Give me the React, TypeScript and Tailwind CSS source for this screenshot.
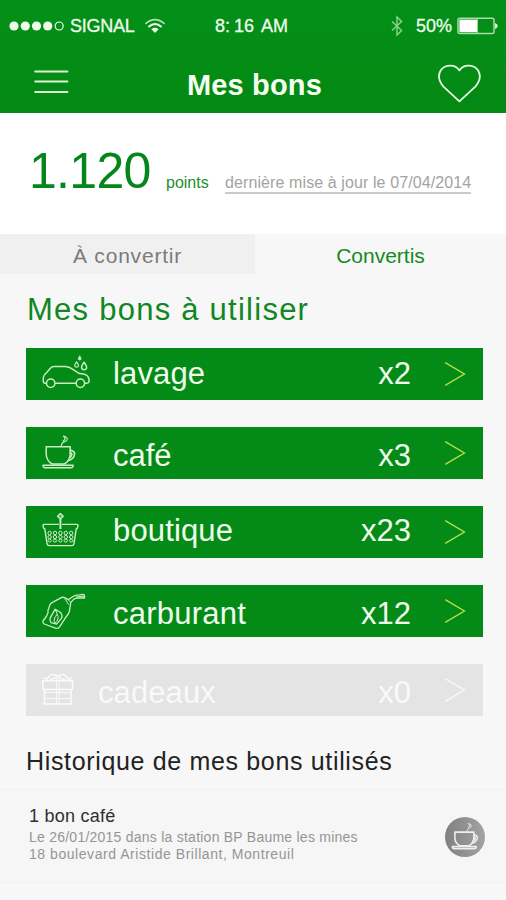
import type { ReactNode } from 'react';
import { clsx } from 'clsx';

interface Voucher {
    label: string;
    count: string;
    icon: ReactNode;
    labelClass: string;
    countClass: string;
    disabled?: boolean;
}

function CarWashIcon() {
    return (
        <svg
            viewBox="0 0 52 38"
            className="h-[38px] w-[52px]"
            fill="none"
            stroke="currentColor"
            strokeWidth="1.5"
            strokeLinejoin="round"
        >
            <path d="M6.5 28.2H4.6Q3.3 28 3.3 26.6V22.5Q3.6 19.6 6.7 17.6L10.6 13Q11.8 11.5 14 11.5H25.5Q29.6 11.8 34 15.2L39.4 18.6Q46 19 47.8 21.4Q49.2 23.6 49.2 26.4Q48.8 28.2 46.6 28.2H44.6M36.1 28.2H14.9" />
            <circle cx="10.7" cy="28.2" r="4.2" />
            <circle cx="40.4" cy="28.2" r="4.2" />
            <path d="M39.7 .8Q41.4 3.2 41 4.4Q39.7 5.8 38.4 4.4Q38 3.2 39.7 .8Z" fill="currentColor" strokeWidth=".8" />
            <path d="M36.6 6.8Q39 10 38.3 11.3Q36.6 13 34.9 11.3Q34.2 10 36.6 6.8Z" strokeWidth="1.2" />
            <path d="M44.1 7.2Q47.3 11.6 46.5 13.4Q44.1 16 41.7 13.4Q40.9 11.6 44.1 7.2Z" />
        </svg>
    );
}

function CupIcon({ className }: { className?: string }) {
    return (
        <svg
            viewBox="0 0 38 38"
            className={className}
            fill="none"
            stroke="currentColor"
            strokeWidth="1.5"
            strokeLinejoin="round"
            strokeLinecap="round"
        >
            <path d="M6.2 12.8H30.2V20Q30 27 24.2 30H12.4Q6.4 27 6.2 20Z" />
            <path d="M30.2 16.2Q33.6 16.2 34.8 19.4Q33.8 25.6 27.8 26.8M30.2 18.8Q31.8 18.8 32 20.2Q31.6 23 29.4 24" />
            <path d="M3 31.2H33.2Q33 33.8 31 33.8H5.2Q3.2 33.8 3 31.2Z" />
            <path d="M23.4 2Q27.8 3.2 27.2 5.6Q26.8 7.2 24.4 7.8Q21.4 8.8 21.2 12.4M23.4 2Q25.6 4 24.8 5.4Q24.2 6.4 23 7" strokeWidth="1.1" />
        </svg>
    );
}

function BasketIcon() {
    return (
        <svg
            viewBox="0 0 52 38"
            className="h-[38px] w-[52px]"
            fill="none"
            stroke="currentColor"
            strokeWidth="1.4"
            strokeLinejoin="round"
        >
            <path d="M18.8 11.4H4Q2.8 11.4 3 12.6L3.5 14.8Q3.8 15.8 4.8 15.8L7 30.6Q7.4 32.6 9.2 32.6H31.8Q33.6 32.6 34 30.6L36.2 15.8Q37.2 15.8 37.5 14.8L38 12.6Q38.2 11.4 37 11.4H22" />
            <path d="M20.4 6V16" strokeWidth="2" />
            <path d="M20.4 .6L23.2 3.3L20.4 6L17.6 3.3Z" fill="currentColor" fillOpacity=".4" />
            {[9.6, 15, 20.4, 25.8, 31.2].map((x) => (
                <g key={x} strokeWidth="1">
                    <ellipse cx={x} cy="20" rx="1.7" ry="1.8" />
                    <ellipse cx={x} cy="24" rx="1.7" ry="1.6" />
                    <ellipse cx={x} cy="27.6" rx="1.7" ry="1.4" />
                </g>
            ))}
        </svg>
    );
}

function NozzleIcon() {
    return (
        <svg
            viewBox="0 0 52 38"
            className="h-[38px] w-[52px]"
            fill="none"
            stroke="currentColor"
            strokeWidth="1.3"
            strokeLinejoin="round"
        >
            <path d="M28.2 7.8L33.4 4.2Q36 2.8 39.4 2.8L43.8 2.4Q45 3.4 44.6 6H38.6Q35.4 5.8 33.4 7.6L30.8 10.4L29.4 19.2Q29 22 26.4 24.4L19.6 34.8Q18.6 36.8 15.6 36.2L4.2 32Q2.4 30.8 3 29L6.6 24Q8.6 21.4 8 18.4L9.6 13.6Q10.2 11.4 12 10.6L21.8 5.4Q24.6 4.6 28.2 7.8Z" />
            <path d="M28.2 7.8L30.8 10.4M36.2 4.8L44.2 4.2M24.6 6.2L28.8 12.8" strokeWidth="1" />
            <path d="M15.2 17.2L20.8 20.8Q23 23.8 21.4 26.4L16.6 32.2L11 30.6Q9.2 28.6 10.2 25.8Z" />
            <path d="M15.2 17.2L17.2 22.2Q12.6 27.2 14.8 31.4M17.2 22.2Q19.8 27.2 14.8 31.4" strokeWidth="1" />
        </svg>
    );
}

function GiftIcon() {
    return (
        <svg
            viewBox="0 0 36 38"
            className="h-[38px] w-9"
            fill="none"
            stroke="currentColor"
            strokeWidth="1.5"
            strokeLinejoin="round"
        >
            <path d="M2.8 9.8H32.6V18.4H2.8ZM4.4 18.4V33H31V18.4M2.8 33H32.4" />
            <path d="M4.4 21.6H31M4.4 27.4H31" strokeWidth="1" />
            <path d="M16.4 5.4V33M19 5.4V33" strokeWidth="1" />
            <path d="M17.7 5.4Q15 3 11 3.8L6.4 8.4L3.4 6.4M17.7 5.4Q20.4 3 24.4 3.8L29 8.4L32 6.4M9.6 9.4L16.4 6.4M25.8 9.4L19 6.4" />
        </svg>
    );
}

function Chevron() {
    return (
        <svg
            viewBox="0 0 22 26"
            className="ml-[33px] h-[26px] w-[22px] shrink-0"
            fill="none"
            stroke="currentColor"
            strokeWidth="1.4"
        >
            <path d="M1.2 1.7L20.4 13L1.2 24.3" />
        </svg>
    );
}

// labelClass / countClass nudge each text to its own baseline
const vouchers: Voucher[] = [
    {
        label: 'lavage',
        count: 'x2',
        icon: <CarWashIcon />,
        labelClass: 'pb-px tracking-[0.15px]',
        countClass: 'pb-px',
    },
    {
        label: 'café',
        count: 'x3',
        icon: <CupIcon className="h-[38px] w-[38px]" />,
        labelClass: 'pt-[5px]',
        countClass: 'pt-[5px]',
    },
    {
        label: 'boutique',
        count: 'x23',
        icon: <BasketIcon />,
        labelClass: 'pb-[2px] tracking-[0.15px]',
        countClass: 'pb-[2px]',
    },
    {
        label: 'carburant',
        count: 'x12',
        icon: <NozzleIcon />,
        labelClass: 'pt-[5px] tracking-[0.25px]',
        countClass: 'pt-[5px]',
    },
    {
        label: 'cadeaux',
        count: 'x0',
        icon: <GiftIcon />,
        labelClass: 'pt-[5px] tracking-[0.1px]',
        countClass: 'pt-[5px]',
        disabled: true,
    },
];

function StatusBar() {
    return (
        <div className="flex h-[51px] items-center pl-2 pr-2 text-[18px] leading-none text-[#eefbe9]">
            <svg viewBox="0 0 58 12" className="h-3 w-[58px]" fill="currentColor">
                <circle cx="6" cy="6" r="4.6" />
                <circle cx="17.3" cy="6" r="4.6" />
                <circle cx="28.5" cy="6" r="4.6" />
                <circle cx="39.7" cy="6" r="4.6" />
                <circle cx="51.2" cy="6" r="4" fill="none" stroke="currentColor" strokeWidth="1.2" />
            </svg>
            <span className="ml-[4px] w-[65px] whitespace-nowrap tracking-[-0.25px] [-webkit-text-stroke:0.3px]">
                SIGNAL
            </span>
            <svg
                viewBox="0 0 22 16"
                className="ml-[9px] h-4 w-[22px]"
                fill="none"
                stroke="currentColor"
            >
                <path d="M1.4 5.8Q11 -2.6 20.6 5.8" strokeWidth="1.6" opacity=".75" />
                <path d="M4.4 9Q11 3 17.6 9" strokeWidth="2" />
                <path d="M7.4 11.2Q11 8.4 14.6 11.2L11 15Z" fill="currentColor" stroke="none" />
            </svg>
            <span className="ml-[49px] whitespace-nowrap [-webkit-text-stroke:0.3px]">
                8:<span className="ml-1">16</span> <span className="ml-0.5">AM</span>
            </span>
            <svg
                viewBox="0 0 12 22"
                className="ml-auto h-[22px] w-3"
                fill="none"
                stroke="#8fd08a"
                strokeWidth="1.4"
            >
                <path d="M1 6.4L10.6 15.4L6 20V2L10.6 6.6L1 15.6" />
            </svg>
            <span className="ml-[13px] w-[37px] whitespace-nowrap [-webkit-text-stroke:0.3px]">
                50%
            </span>
            <svg viewBox="0 0 41 18" className="ml-[4px] h-[18px] w-[41px]">
                <rect x="1" y="1.2" width="36" height="15.4" rx="1.6" fill="none" stroke="#a9dca2" strokeWidth="1.5" />
                <rect x="2.4" y="2.6" width="18" height="12.6" fill="#fff" />
                <path d="M20.4 2V16" stroke="#a9dca2" />
                <path d="M38 6Q40.8 7.2 40.8 9Q40.8 10.8 38 12Z" fill="#dff5da" />
            </svg>
        </div>
    );
}

function NavBar() {
    return (
        <div className="flex h-[62px] items-start pl-[34px] pr-6">
            <svg
                viewBox="0 0 36 24"
                className="mt-[19px] h-6 w-9"
                stroke="#dcf5d5"
                strokeWidth="2"
                strokeLinecap="round"
            >
                <path d="M1.2 1.6H33.4M1.2 11.6H33.4M1.2 22H33.4" />
            </svg>
            <h1 className="ml-[117px] mt-[19px] whitespace-nowrap text-[29px] font-bold leading-[30px] tracking-[0.15px] text-[#f6fff2]">
                Mes bons
            </h1>
            <svg
                viewBox="0 0 44 40"
                className="ml-auto mt-[12px] h-10 w-11"
                fill="none"
                stroke="#e6f9e0"
                strokeWidth="1.8"
                strokeLinejoin="round"
            >
                <path d="M21.4 38.4L5.2 23.4Q-1.8 14.4 2.8 7.2C7.6 1 17.4 1.4 21.4 7.4C25.4 1.4 35.2 1 40 7.2Q44.6 14.4 37.6 23.4Z" />
            </svg>
        </div>
    );
}

function VoucherRow({ voucher }: { voucher: Voucher }) {
    return (
        <li
            className={clsx(
                'flex h-[52px] items-center pl-3.5 pr-[17px]',
                voucher.disabled ? 'bg-[#e4e4e4]' : 'bg-[#048b17]',
            )}
        >
            <span
                className={clsx(
                    'shrink-0',
                    voucher.disabled ? 'w-[58px] text-[#fafafa]' : 'w-[73px] text-[#c9ecc0]',
                )}
            >
                {voucher.icon}
            </span>
            <span
                className={clsx(
                    'text-[31px] leading-9',
                    voucher.disabled ? 'text-[#f9f9f9]' : 'text-[#f1fdec]',
                    voucher.labelClass,
                )}
            >
                {voucher.label}
            </span>
            <span
                className={clsx(
                    'ml-auto text-[31px] leading-9',
                    voucher.disabled ? 'text-[#f9f9f9]' : 'text-[#f1fdec]',
                    voucher.countClass,
                )}
            >
                {voucher.count}
            </span>
            <span className={voucher.disabled ? 'text-[#f9f9f9]' : 'text-[#b4de45]'}>
                <Chevron />
            </span>
        </li>
    );
}

export default function App() {
    return (
        <div className="h-[900px] w-[506px] overflow-hidden bg-[#f7f7f7] font-['Liberation_Sans',Arial,sans-serif]">
            <header className="h-[113px] bg-linear-to-b from-[#039018] to-[#048913]">
                <StatusBar />
                <NavBar />
            </header>

            <section className="flex h-[121px] items-baseline bg-white pl-[29px] pt-[30px] text-[16px] leading-[20px]">
                <p className="w-[137px] text-[50px] leading-[56px] tracking-[-0.7px] text-[#05861a]">1.120</p>
                <p className="w-[59px] text-[#1d8f2d]">points</p>
                <p className="whitespace-nowrap border-b-2 border-[#c9c9c9] leading-[18px] tracking-[0.1px] text-[#a3a3a3]">
                    dernière mise à jour le 07/04/2014
                </p>
            </section>

            <nav className="flex h-10 whitespace-nowrap">
                <button className="w-[255px] bg-[#f0f0f0] pt-[3px] text-[21px] tracking-[0.8px] text-[#7b7b7b]">
                    À convertir
                </button>
                <button className="w-[251px] pt-[3px] text-[21px] text-[#148a24]">
                    Convertis
                </button>
            </nav>

            <main>
                <h2 className="mt-[18px] whitespace-nowrap pl-[27px] text-[31px] leading-9 tracking-[1.25px] text-[#108722]">
                    Mes bons à utiliser
                </h2>
                <ul className="ml-[26px] mt-5 flex w-[457px] flex-col gap-[27px]">
                    {vouchers.map((voucher) => (
                        <VoucherRow key={voucher.label} voucher={voucher} />
                    ))}
                </ul>

                <h2 className="mt-[30px] h-[43px] whitespace-nowrap pl-[26px] text-[25px] leading-[30px] tracking-[0.66px] text-[#222222]">
                    Historique de mes bons utilisés
                </h2>
                <article className="flex h-[94px] items-start justify-between border-y border-[#f1f1f1] bg-[#f6f6f6] pl-[29px] pr-[21px]">
                    <div className="whitespace-nowrap pt-[16px] text-[14px] leading-[17px] text-[#959595]">
                        <h3 className="mb-[3px] text-[18px] leading-5 tracking-[0.25px] text-[#303030]">
                            1 bon café
                        </h3>
                        <p className="tracking-[0.24px]">
                            Le 26/01/2015 dans la station BP Baume les mines
                        </p>
                        <p className="tracking-[0.55px]">
                            18 boulevard Aristide Brillant, Montreuil
                        </p>
                    </div>
                    <div className="mt-[27px] flex size-10 items-center justify-center rounded-full bg-linear-to-r from-[#808080] to-[#a3a3a3] text-[#eeeeee]">
                        <CupIcon className="size-[30px] [stroke-width:2]" />
                    </div>
                </article>
            </main>
        </div>
    );
}
